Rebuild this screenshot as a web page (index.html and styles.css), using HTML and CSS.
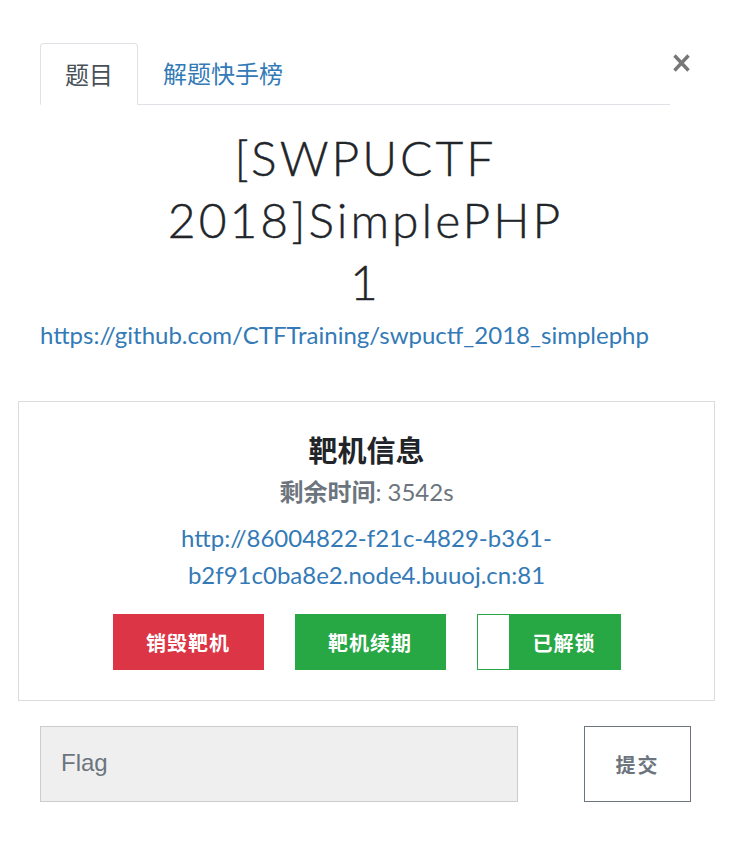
FILE: index.html
```html
<!DOCTYPE html>
<html lang="zh">
<head>
<meta charset="utf-8">
<title>SimplePHP</title>
<link rel="stylesheet" href="styles.css">
</head>
<body>
<div class="modal">
  <div class="head">
    <ul class="tabs">
      <li class="tab active">题目</li>
      <li class="tab link">解题快手榜</li>
    </ul>
    <button class="close" aria-label="close"><svg width="17" height="18" viewBox="0 0 17 18"><path d="M1.5 1.5 L15.5 16.5 M15.5 1.5 L1.5 16.5" stroke="#777" stroke-width="3.4" stroke-linecap="butt" fill="none"/></svg></button>
  </div>
  <h1 class="title">[SWPUCTF 2018]SimplePHP 1</h1>
  <a class="repo" href="#">https://github.com/CTFTraining/swpuctf_2018_simplephp</a>
  <div class="panel">
    <h2 class="panel-title">靶机信息</h2>
    <div class="remain"><span class="lbl">剩余时间</span>: 3542s</div>
    <a class="target" href="#">http://86004822-f21c-4829-b361-b2f91c0ba8e2.node4.buuoj.cn:81</a>
    <div class="actions">
      <button class="btn red">销毁靶机</button>
      <button class="btn green">靶机续期</button>
      <button class="btn toggle"><span class="knob"></span><span class="tlabel">已解锁</span></button>
    </div>
  </div>
  <div class="submit-row">
    <div class="flag">Flag</div>
    <button class="submit">提交</button>
  </div>
</div>
</body>
</html>
```
FILE: styles.css
```css
* { box-sizing: border-box; }
body {
  margin: 0;
  background: #fff;
  font-family: Lato, "Noto Sans CJK SC", sans-serif;
  color: #212529;
}
.modal {
  width: 731px;
  padding: 43px 40px 0 40px;
}
.head {
  display: flex;
  align-items: flex-start;
}
.tabs {
  list-style: none;
  margin: 0;
  padding: 0;
  display: flex;
  width: 630px;
  border-bottom: 1px solid #dee2e6;
}
.tab {
  height: 61px;
  padding: 0 25px;
  font-size: 24px;
  line-height: 60px;
  font-family: "Noto Sans CJK SC", sans-serif;
}
.tab.active {
  border: 1px solid #dee2e6;
  border-bottom-color: #fff;
  border-radius: 4px 4px 0 0;
  margin-bottom: -1px;
  height: 62px;
  color: #495057;
  width: 98px;
  text-align: center;
  padding: 0;
}
.tab.link { color: #337ab7; }
.close {
  margin-left: auto;
  border: 0;
  background: none;
  padding: 0;
  margin-top: 11px;
  margin-right: 1px;
  width: 17px;
  height: 18px;
  display: block;
}
.close svg { display: block; }
.title {
  margin: 22px auto 0;
  width: 420px;
  text-align: center;
  font-family: Lato, sans-serif;
  font-weight: 300;
  font-size: 48px;
  letter-spacing: 3px;
  line-height: 62px;
  color: #212529;
  -webkit-text-stroke: 0.4px #212529;
}
.repo {
  display: block;
  margin-top: 6px;
  font-size: 24px;
  color: #337ab7;
  text-decoration: none;
  line-height: 32px;
}
.panel {
  margin: 50px -24px 0 -22px;
  border: 1px solid #dcdcdc;
  padding: 27px 20px 30px;
  text-align: center;
}
.panel-title {
  margin: 0;
  font-size: 29px;
  font-weight: bold;
  line-height: 44px;
  font-family: Lato, "Noto Sans CJK SC", sans-serif;
}
.remain {
  color: #6c757d;
  font-size: 24px;
  line-height: 38px;
}
.remain .lbl { font-weight: bold; }
.target {
  display: block;
  margin: 8px auto 0;
  padding: 0 60px;
  font-size: 24px;
  line-height: 37px;
  color: #337ab7;
  text-decoration: none;
}
.actions {
  display: flex;
  justify-content: center;
  gap: 31px;
  margin-top: 21px;
}
.btn {
  height: 56px;
  width: 151px;
  border: 0;
  color: #fff;
  font-family: "Noto Sans CJK SC", sans-serif;
  font-weight: bold;
  font-size: 20px;
  letter-spacing: 1px;
  padding: 0;
}
.btn.red { background: #dc3545; }
.btn.green { background: #28a745; }
.btn.toggle {
  width: 144px;
  background: #28a745;
  border: 1px solid #28a745;
  display: flex;
  align-items: stretch;
}
.knob {
  width: 31px;
  background: #fff;
}
.tlabel {
  flex: 1;
  display: flex;
  align-items: center;
  justify-content: center;
}
.submit-row {
  display: flex;
  justify-content: space-between;
  margin-top: 25px;
}
.flag {
  width: 478px;
  height: 76px;
  background: #efefef;
  border: 1px solid #ccc;
  font-family: "Liberation Sans", sans-serif;
  font-size: 24px;
  color: #6c757d;
  padding: 0 20px;
  line-height: 72px;
}
.submit {
  width: 107px;
  height: 76px;
  background: #fff;
  border: 1px solid #6c757d;
  color: #6c757d;
  font-family: "Noto Sans CJK SC", sans-serif;
  font-weight: bold;
  font-size: 20px;
  letter-spacing: 2px;
}
```
